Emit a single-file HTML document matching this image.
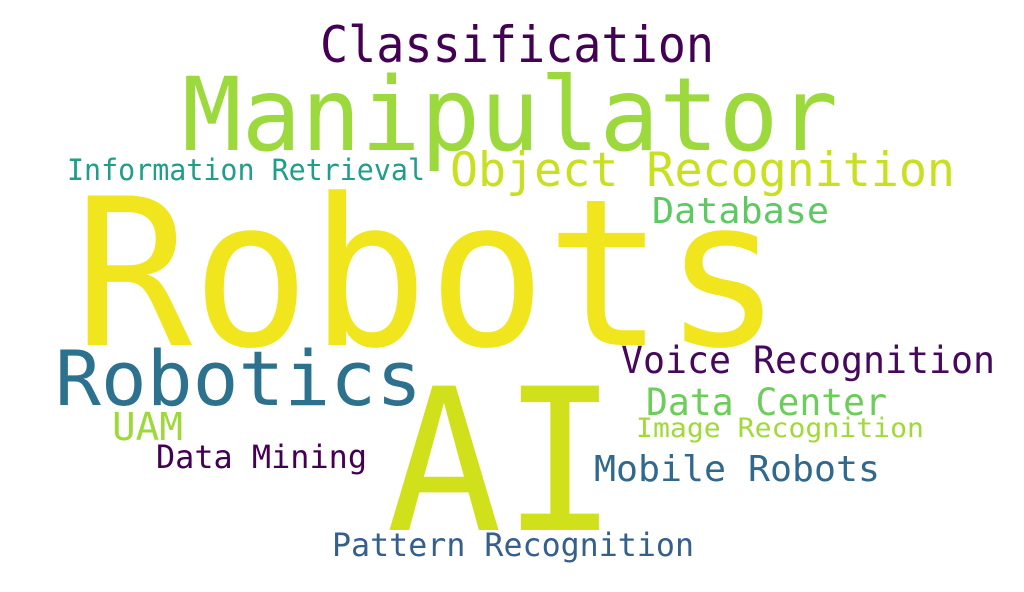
<!DOCTYPE html>
<html><head><meta charset="utf-8"><style>
html,body{margin:0;padding:0;background:#fff;}
svg{display:block;}
text{font-family:"DejaVu Sans Mono","Liberation Mono",monospace;}
</style></head><body>
<svg width="1024" height="592" viewBox="0 0 1024 592" xmlns="http://www.w3.org/2000/svg">
<rect width="1024" height="592" fill="#fff"/>
<text x="320" y="62" font-size="50" fill="#440154" textLength="394" lengthAdjust="spacingAndGlyphs">Classification</text>
<text x="182" y="150" font-size="102" fill="#9bd93c" textLength="656" lengthAdjust="spacingAndGlyphs">Manipulator</text>
<text x="450" y="186" font-size="47" fill="#c8e020" textLength="505" lengthAdjust="spacingAndGlyphs">Object Recognition</text>
<text x="67" y="180" font-size="29" fill="#1f9e89" textLength="358" lengthAdjust="spacingAndGlyphs">Information Retrieval</text>
<text x="652" y="223" font-size="36" fill="#5ec962" textLength="177" lengthAdjust="spacingAndGlyphs">Database</text>
<text x="74" y="345" font-size="205" fill="#f1e51d" textLength="708" lengthAdjust="spacingAndGlyphs">Robots</text>
<text x="55" y="405" font-size="76" fill="#2c728e" textLength="367" lengthAdjust="spacingAndGlyphs">Robotics</text>
<text x="621" y="373" font-size="37" fill="#46085c" textLength="374" lengthAdjust="spacingAndGlyphs">Voice Recognition</text>
<text x="386" y="530" font-size="198" fill="#d0e11c" textLength="232" lengthAdjust="spacingAndGlyphs">AI</text>
<text x="646" y="415" font-size="37" fill="#6ccd5a" textLength="241" lengthAdjust="spacingAndGlyphs">Data Center</text>
<text x="636" y="437" font-size="27" fill="#a0da39" textLength="288" lengthAdjust="spacingAndGlyphs">Image Recognition</text>
<text x="112" y="440" font-size="38" fill="#9dd93b" textLength="71" lengthAdjust="spacingAndGlyphs">UAM</text>
<text x="156" y="468" font-size="32" fill="#440154" textLength="211" lengthAdjust="spacingAndGlyphs">Data Mining</text>
<text x="594" y="481" font-size="36" fill="#31688e" textLength="286" lengthAdjust="spacingAndGlyphs">Mobile Robots</text>
<text x="332" y="556" font-size="32" fill="#355f8d" textLength="362" lengthAdjust="spacingAndGlyphs">Pattern Recognition</text>
</svg>
</body></html>
